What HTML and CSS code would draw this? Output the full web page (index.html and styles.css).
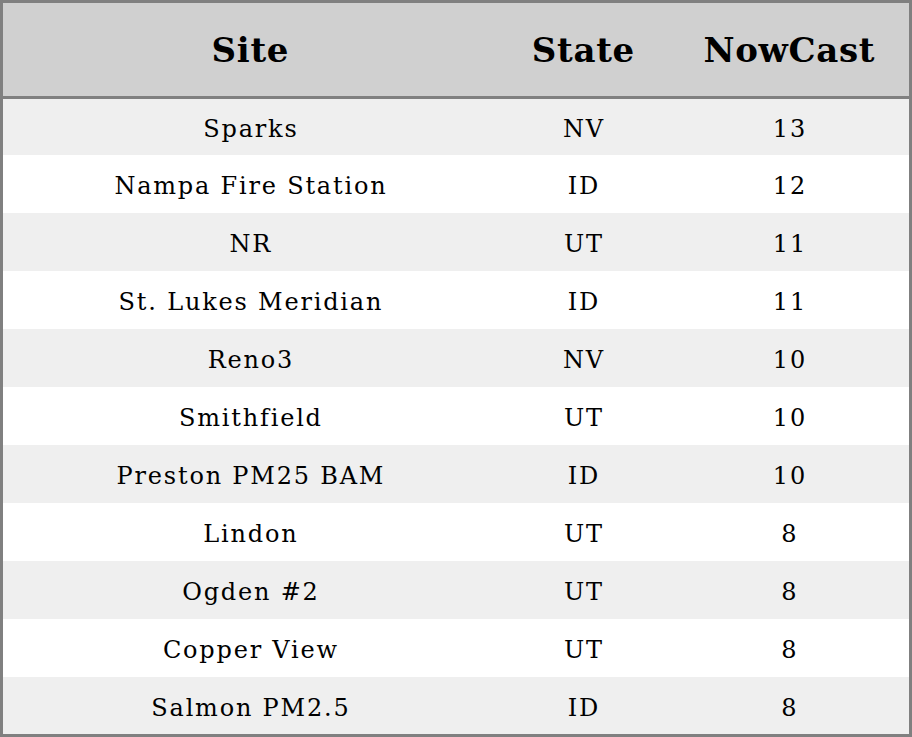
FILE: index.html
```html
<!DOCTYPE html>
<html>
<head>
<meta charset="utf-8">
<link rel="stylesheet" href="styles.css">
</head>
<body>
<div class="table">
  <div class="row head">
    <div class="c site">Site</div>
    <div class="c state">State</div>
    <div class="c now">NowCast</div>
  </div>
  <div class="row first"><div class="c site">Sparks</div><div class="c state">NV</div><div class="c now">13</div></div>
  <div class="row"><div class="c site">Nampa Fire Station</div><div class="c state">ID</div><div class="c now">12</div></div>
  <div class="row"><div class="c site">NR</div><div class="c state">UT</div><div class="c now">11</div></div>
  <div class="row"><div class="c site">St. Lukes Meridian</div><div class="c state">ID</div><div class="c now">11</div></div>
  <div class="row"><div class="c site">Reno3</div><div class="c state">NV</div><div class="c now">10</div></div>
  <div class="row"><div class="c site">Smithfield</div><div class="c state">UT</div><div class="c now">10</div></div>
  <div class="row"><div class="c site">Preston PM25 BAM</div><div class="c state">ID</div><div class="c now">10</div></div>
  <div class="row"><div class="c site">Lindon</div><div class="c state">UT</div><div class="c now">8</div></div>
  <div class="row"><div class="c site">Ogden #2</div><div class="c state">UT</div><div class="c now">8</div></div>
  <div class="row"><div class="c site">Copper View</div><div class="c state">UT</div><div class="c now">8</div></div>
  <div class="row last"><div class="c site">Salmon PM2.5</div><div class="c state">ID</div><div class="c now">8</div></div>
</div>
</body>
</html>
```
FILE: styles.css
```css
html, body {
  margin: 0;
  padding: 0;
  background: #ffffff;
}
.table {
  width: 912px;
  height: 737px;
  box-sizing: border-box;
  border: 3px solid #808080;
  font-family: "DejaVu Serif", serif;
  color: #000;
  display: flex;
  flex-direction: column;
  overflow: hidden;
}
.row {
  display: grid;
  grid-template-columns: 494px 172px 240px;
  height: 58px;
  flex: none;
  font-size: 24px;
  letter-spacing: 1.8px;
}
.row .c {
  padding-top: 4px;
  padding-left: 1.8px;
}
.row:nth-child(even) {
  background: #efefef;
}
.row.first { height: 56px; }
.row.last { height: 57px; }
.row.head {
  height: 93px;
  background: #d0d0d0;
  border-bottom: 3px solid #808080;
  font-size: 34px;
  font-weight: bold;
  letter-spacing: 0.7px;
}
.row.head .c {
  padding-top: 0;
  padding-left: 0.7px;
}
.c {
  display: flex;
  align-items: center;
  justify-content: center;
  white-space: nowrap;
  box-sizing: border-box;
}
```
